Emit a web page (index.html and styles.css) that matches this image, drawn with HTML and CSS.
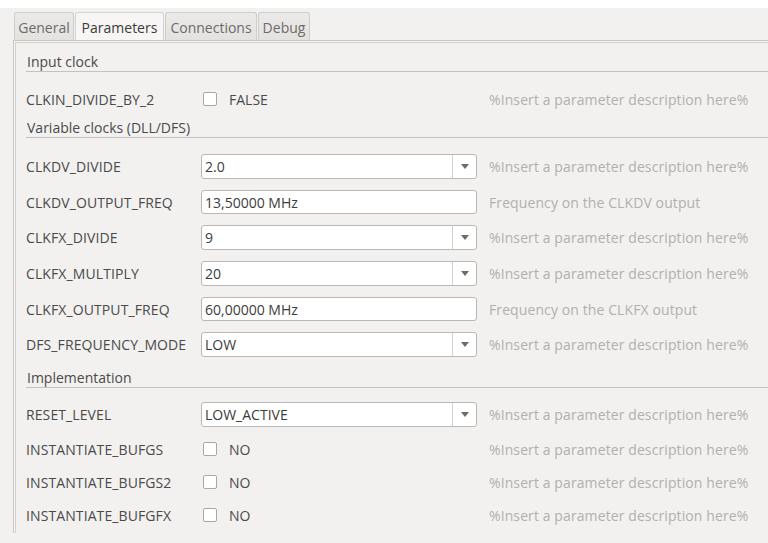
FILE: index.html
```html
<!DOCTYPE html>
<html>
<head>
<meta charset="utf-8">
<link rel="stylesheet" href="styles.css">
</head>
<body>
<div class="window">
  <div class="tabbar">
    <div class="tab">General</div>
    <div class="tab active">Parameters</div>
    <div class="tab">Connections</div>
    <div class="tab">Debug</div>
  </div>
  <div class="pane">
    <div class="group-title g1">Input clock</div>
    <div class="row r-first1 r-check">
      <div class="label">CLKIN_DIVIDE_BY_2</div>
      <div class="control"><span class="checkbox"></span><span class="check-text">FALSE</span></div>
      <div class="desc">%Insert a parameter description here%</div>
    </div>

    <div class="group-title g2">Variable clocks (DLL/DFS)</div>
    <div class="row r-first2 r-field">
      <div class="label">CLKDV_DIVIDE</div>
      <div class="control"><div class="combo"><span class="value">2.0</span><span class="drop"><span class="arrow"></span></span></div></div>
      <div class="desc">%Insert a parameter description here%</div>
    </div>
    <div class="row r-field">
      <div class="label">CLKDV_OUTPUT_FREQ</div>
      <div class="control"><div class="edit">13,50000 MHz</div></div>
      <div class="desc">Frequency on the CLKDV output</div>
    </div>
    <div class="row r-field">
      <div class="label">CLKFX_DIVIDE</div>
      <div class="control"><div class="combo"><span class="value">9</span><span class="drop"><span class="arrow"></span></span></div></div>
      <div class="desc">%Insert a parameter description here%</div>
    </div>
    <div class="row r-field">
      <div class="label">CLKFX_MULTIPLY</div>
      <div class="control"><div class="combo"><span class="value">20</span><span class="drop"><span class="arrow"></span></span></div></div>
      <div class="desc">%Insert a parameter description here%</div>
    </div>
    <div class="row r-field">
      <div class="label">CLKFX_OUTPUT_FREQ</div>
      <div class="control"><div class="edit">60,00000 MHz</div></div>
      <div class="desc">Frequency on the CLKFX output</div>
    </div>
    <div class="row r-field">
      <div class="label">DFS_FREQUENCY_MODE</div>
      <div class="control"><div class="combo"><span class="value">LOW</span><span class="drop"><span class="arrow"></span></span></div></div>
      <div class="desc">%Insert a parameter description here%</div>
    </div>

    <div class="group-title g3">Implementation</div>
    <div class="row r-first3 r-reset">
      <div class="label">RESET_LEVEL</div>
      <div class="control"><div class="combo"><span class="value">LOW_ACTIVE</span><span class="drop"><span class="arrow"></span></span></div></div>
      <div class="desc">%Insert a parameter description here%</div>
    </div>
    <div class="row r-check">
      <div class="label">INSTANTIATE_BUFGS</div>
      <div class="control"><span class="checkbox"></span><span class="check-text">NO</span></div>
      <div class="desc">%Insert a parameter description here%</div>
    </div>
    <div class="row r-check">
      <div class="label">INSTANTIATE_BUFGS2</div>
      <div class="control"><span class="checkbox"></span><span class="check-text">NO</span></div>
      <div class="desc">%Insert a parameter description here%</div>
    </div>
    <div class="row r-check">
      <div class="label">INSTANTIATE_BUFGFX</div>
      <div class="control"><span class="checkbox"></span><span class="check-text">NO</span></div>
      <div class="desc">%Insert a parameter description here%</div>
    </div>
  </div>
</div>
</body>
</html>
```

FILE: styles.css
```css
html, body {
  margin: 0;
  padding: 0;
  background: #ffffff;
}

body {
  font-family: "Open Sans", "DejaVu Sans", sans-serif;
  font-size: 14px;
  color: #4a4a4a;
  overflow: hidden;
}

.window {
  margin-top: 8px;
  height: 535px;
  background: #f2f1f0;
}

/* tab strip */
.tabbar {
  display: flex;
  padding: 4px 0 0 14px;
  height: 28px;
}

.tab {
  box-sizing: border-box;
  height: 28px;
  line-height: 30px;
  text-align: center;
  margin-right: 1px;
  border: 1px solid #cfcdca;
  border-bottom: none;
  border-radius: 3px 3px 0 0;
  background: linear-gradient(#ebeae8, #e3e2df);
  color: #6d6b69;
  white-space: nowrap;
  overflow: hidden;
}

.tab:nth-child(1) { width: 60px; }
.tab:nth-child(2) { width: 89px; }
.tab:nth-child(3) { width: 92px; }
.tab:nth-child(4) { width: 52px; }

.tab.active {
  background: #f7f6f5;
  color: #3a3a3a;
  border-color: #d6d4d1;
}

/* content frame */
.pane {
  margin-left: 13px;
  border-top: 1px solid #c9c7c4;
  border-left: 1px solid #c9c7c4;
  box-shadow: inset 1px 1px 0 #f7f6f5, inset 2px 2px 0 #d3d1ce;
  padding: 12px 0 0 12px;
  height: 480px;
}

.group-title {
  line-height: 18px;
  height: 18px;
  padding-left: 1px;
  border-bottom: 1px solid #c4c2bf;
  color: #4a4a4a;
}

.g1 { margin-top: 0; }
.g2 { margin-top: 3px; }
.g3 { margin-top: 6px; }

.row {
  display: grid;
  grid-template-columns: 175px 276px 1fr;
  align-items: center;
  white-space: nowrap;
}

.r-check { height: 33px; }
.r-field { height: 35.6px; }
.r-reset { height: 36px; }

.r-first1 { margin-top: 10px; height: 34px; }
.r-first2 { margin-top: 11px; }
.r-first3 { margin-top: 9px; }

.label {
  color: #4a4a4a;
  letter-spacing: 0.1px;
}

.desc {
  padding-left: 12px;
  color: #b4afab;
  letter-spacing: 0.1px;
}

.control {
  display: flex;
  align-items: center;
}

.checkbox {
  width: 12px;
  height: 12px;
  margin-left: 2px;
  border: 1px solid #aaa7a4;
  border-radius: 2px;
  background: #ffffff;
}

.check-text {
  margin-left: 12px;
  color: #4a4a4a;
}

.combo, .edit {
  box-sizing: border-box;
  width: 276px;
  height: 25px;
  border: 1px solid #bab7b4;
  border-radius: 3px;
  background: #ffffff;
  color: #3c3c3c;
  display: flex;
  align-items: center;
}

.edit {
  padding-left: 3px;
  height: 24px;
}

.value {
  flex: 1;
  padding-left: 3px;
}

.drop {
  width: 23px;
  height: 100%;
  border-left: 1px solid #d4d2cf;
  display: flex;
  align-items: center;
  justify-content: center;
}

.arrow {
  width: 0;
  height: 0;
  border-left: 4px solid transparent;
  border-right: 4px solid transparent;
  border-top: 5px solid #6e6c6a;
}
```
